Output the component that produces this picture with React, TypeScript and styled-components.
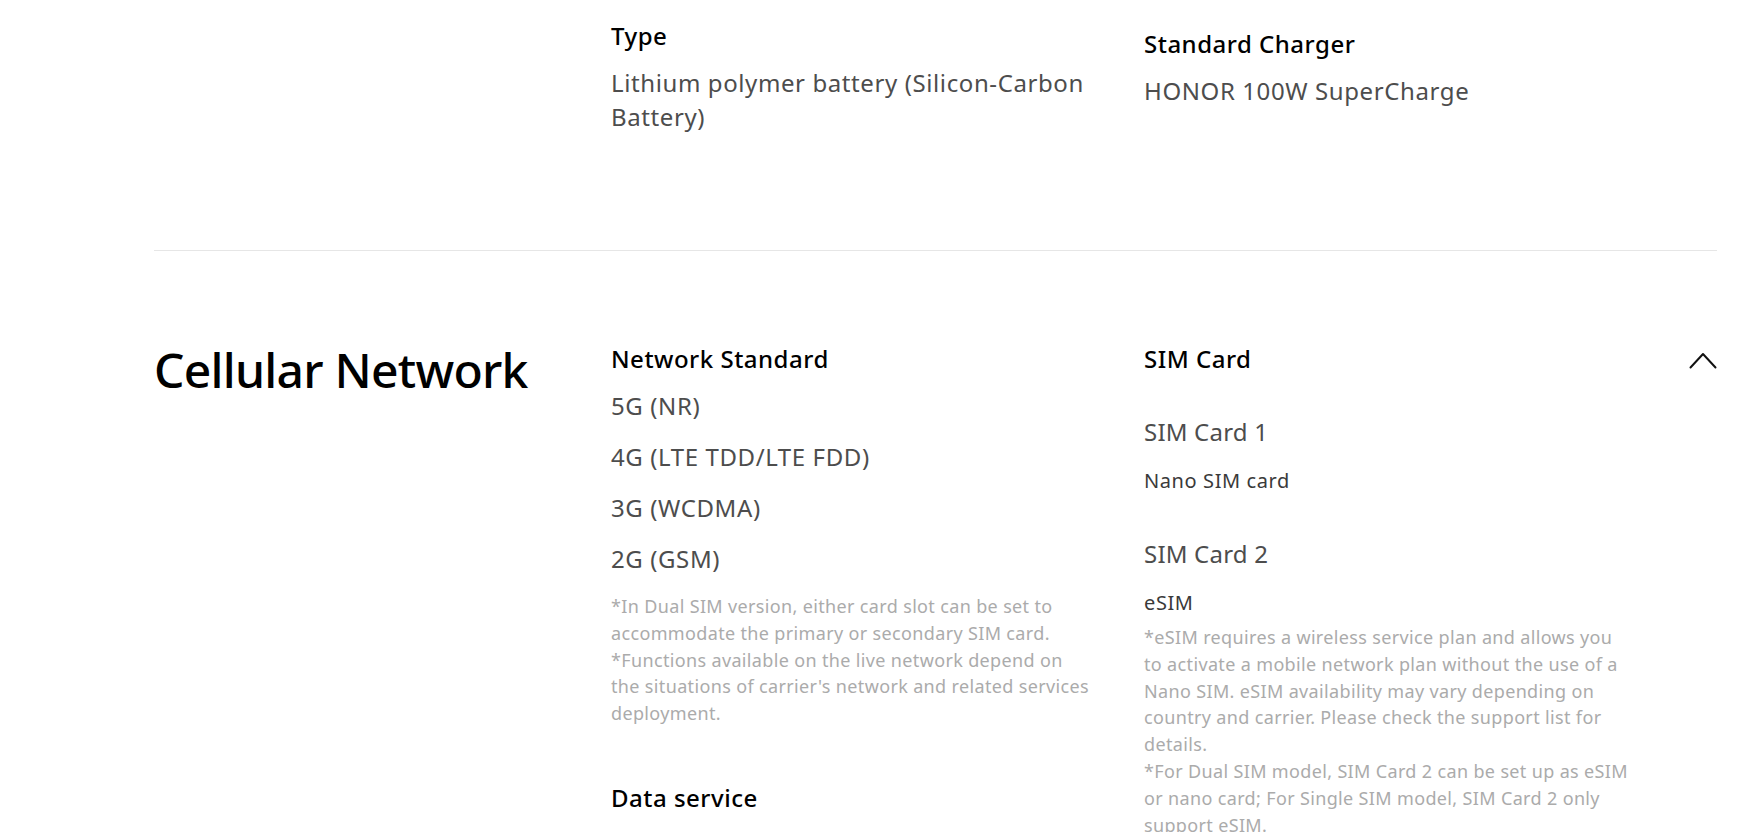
import React from "react";
import styled, { createGlobalStyle } from "styled-components";

const GlobalStyle = createGlobalStyle`
  html, body {
    margin: 0;
    padding: 0;
    background: #ffffff;
  }
  body {
    font-family: "Noto Sans", Roboto, "Liberation Sans", sans-serif;
    color: #000000;
    overflow: hidden;
    -webkit-font-smoothing: antialiased;
  }
`;

const Page = styled.main`
  padding: 0 35px 0 154px;
`;

const Section = styled.section<{ $pt: number; $height?: number; $divider?: boolean }>`
  display: flex;
  align-items: flex-start;
  padding-top: ${(p) => p.$pt}px;
  box-sizing: border-box;
  ${(p) => (p.$height ? `height: ${p.$height}px;` : "")}
  ${(p) => (p.$divider ? "border-bottom: 1px solid #e6e6e6;" : "")}
`;

const SectionTitle = styled.h2`
  flex: 0 0 457px;
  margin: 0;
  font-size: 48px;
  line-height: 54px;
  font-weight: 500;
  letter-spacing: -0.75px;
  color: #000;
`;

const SpecGrid = styled.div`
  display: grid;
  grid-template-columns: 482px 486px;
  column-gap: 51px;
  align-items: start;
`;

const SpecColumn = styled.div<{ $offset?: number }>`
  display: flex;
  flex-direction: column;
  gap: 55px;
  margin-top: ${(p) => p.$offset ?? 0}px;
`;

const SpecBlock = styled.div`
  display: flex;
  flex-direction: column;
`;

const Label = styled.h3`
  margin: 0;
  font-size: 24px;
  line-height: 32px;
  font-weight: 500;
  letter-spacing: 0.5px;
  color: #000;
`;

const ValueList = styled.div`
  display: flex;
  flex-direction: column;
  gap: 17px;
  margin-top: 14px;
`;

const Value = styled.div`
  font-size: 24px;
  line-height: 34px;
  font-weight: 400;
  letter-spacing: 0.6px;
  color: #4d4d4d;
`;

const Note = styled.p<{ $top: number }>`
  margin: ${(p) => p.$top}px 0 0;
  font-size: 18px;
  line-height: 26.8px;
  font-weight: 400;
  letter-spacing: 0.35px;
  color: #ababab;
`;

const SubGroup = styled.div`
  display: flex;
  flex-direction: column;
  margin-top: 40px;
  & + & {
    margin-top: 41px;
  }
`;

const SubTitle = styled.div`
  font-size: 24px;
  line-height: 34px;
  letter-spacing: 0.2px;
  color: #4d4d4d;
`;

const SubValue = styled.div`
  margin-top: 17px;
  font-size: 20px;
  line-height: 30px;
  letter-spacing: 0.6px;
  color: #3a3a3a;
`;

const Toggle = styled.button`
  margin-left: auto;
  margin-top: 8px;
  padding: 0;
  border: 0;
  background: none;
  width: 28px;
  height: 18px;
  display: flex;
  cursor: pointer;
`;

const ChevronUp = () => (
  <svg width="28" height="18" viewBox="0 0 28 18" fill="none">
    <polyline
      points="1.5,16.5 14,3 26.5,16.5"
      stroke="#111"
      strokeWidth="2"
      strokeLinecap="round"
      strokeLinejoin="round"
    />
  </svg>
);

export default function App() {
  return (
    <>
      <GlobalStyle />
      <Page>
        <Section $pt={20} $height={251} $divider>
          <SectionTitle />
          <SpecGrid>
            <SpecColumn>
              <SpecBlock>
                <Label>Type</Label>
                <ValueList>
                  <Value>Lithium polymer battery (Silicon-Carbon Battery)</Value>
                </ValueList>
              </SpecBlock>
            </SpecColumn>
            <SpecColumn $offset={8}>
              <SpecBlock>
                <Label>Standard Charger</Label>
                <ValueList>
                  <Value>HONOR 100W SuperCharge</Value>
                </ValueList>
              </SpecBlock>
            </SpecColumn>
          </SpecGrid>
        </Section>

        <Section $pt={92}>
          <SectionTitle>Cellular Network</SectionTitle>
          <SpecGrid>
            <SpecColumn>
              <SpecBlock>
                <Label>Network Standard</Label>
                <ValueList>
                  <Value>5G (NR)</Value>
                  <Value>4G (LTE TDD/LTE FDD)</Value>
                  <Value>3G (WCDMA)</Value>
                  <Value>2G (GSM)</Value>
                </ValueList>
                <Note $top={17}>
                  *In Dual SIM version, either card slot can be set to accommodate the primary or
                  secondary SIM card.
                  <br />
                  *Functions available on the live network depend on the situations of carrier's
                  network and related services deployment.
                </Note>
              </SpecBlock>
              <SpecBlock>
                <Label>Data service</Label>
              </SpecBlock>
            </SpecColumn>
            <SpecColumn>
              <SpecBlock>
                <Label>SIM Card</Label>
                <SubGroup>
                  <SubTitle>SIM Card 1</SubTitle>
                  <SubValue>Nano SIM card</SubValue>
                </SubGroup>
                <SubGroup>
                  <SubTitle>SIM Card 2</SubTitle>
                  <SubValue>eSIM</SubValue>
                  <Note $top={6}>
                    *eSIM requires a wireless service plan and allows you to activate a mobile
                    network plan without the use of a Nano SIM. eSIM availability may vary
                    depending on country and carrier. Please check the support list for details.
                    <br />
                    *For Dual SIM model, SIM Card 2 can be set up as eSIM or nano card; For Single
                    SIM model, SIM Card 2 only support eSIM.
                  </Note>
                </SubGroup>
              </SpecBlock>
            </SpecColumn>
          </SpecGrid>
          <Toggle aria-label="Collapse">
            <ChevronUp />
          </Toggle>
        </Section>
      </Page>
    </>
  );
}
